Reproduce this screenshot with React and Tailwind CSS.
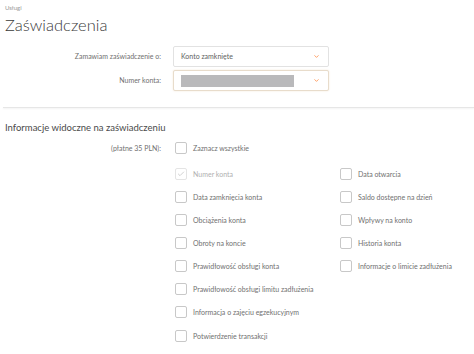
import { ChevronDown, Check } from 'lucide-react'

const rows = [
  ['Data zamknięcia konta', 'Saldo dostępne na dzień'],
  ['Obciążenia konta', 'Wpływy na konto'],
  ['Obroty na koncie', 'Historia konta'],
  ['Prawidłowość obsługi konta', 'Informacje o limicie zadłużenia'],
  ['Prawidłowość obsługi limitu zadłużenia', null],
  ['Informacja o zajęciu egzekucyjnym', null],
]

function Box({ checked, disabled }) {
  return (
    <span
      className={`flex h-[12px] w-[12px] shrink-0 items-center justify-center rounded-[2px] border ${
        disabled ? 'border-[#e4e4e4]' : 'border-[#c8c8c8]'
      } bg-white`}
    >
      {checked && <Check className="h-[8px] w-[8px] text-[#bbb]" strokeWidth={2} />}
    </span>
  )
}

function Item({ label, checked, disabled }) {
  return (
    <div className="flex h-[12px] items-center gap-[6px]">
      <Box checked={checked} disabled={disabled} />
      <span className={`text-[7px] ${disabled ? 'text-[#b0b0b0]' : 'text-[#707070]'}`}>{label}</span>
    </div>
  )
}

function Select({ children, active }) {
  return (
    <div
      className={`flex h-[21px] w-[156px] items-center justify-between rounded-[2px] border bg-white pl-[7px] pr-[8px] ${
        active ? 'border-[#e8dccb] shadow-[0_0_2px_#f3e6d6]' : 'border-[#e2e2e2]'
      }`}
    >
      {children}
      <ChevronDown className="h-[7px] w-[7px] text-[#ff6200]" strokeWidth={2} />
    </div>
  )
}

export default function App() {
  return (
    <div className="h-[354px] w-[474px] overflow-hidden bg-white font-['Lato',sans-serif] text-[#333]">
      <div className="px-[5px] pt-[4px]">
        <p className="text-[6px] leading-[8px] text-[#999]">Usługi</p>
        <h1 className="mt-[3px] text-[16.5px] font-light leading-[20px] text-[#3a3a3a]">Zaświadczenia</h1>
      </div>

      <div className="mt-[11px] flex flex-col gap-[3px]">
        <div className="flex items-center">
          <span className="w-[161px] text-right text-[7px] text-[#707070]">Zamawiam zaświadczenie o:</span>
          <div className="ml-[12px]">
            <Select>
              <span className="text-[7px] text-[#606060]">Konto zamknięte</span>
            </Select>
          </div>
        </div>
        <div className="flex items-center">
          <span className="w-[161px] text-right text-[7px] text-[#707070]">Numer konta:</span>
          <div className="ml-[12px]">
            <Select active>
              <span className="h-[12px] w-[113px] bg-[#b9b9bb]" />
            </Select>
          </div>
        </div>
      </div>

      <div className="ml-[3px] mt-[16px] h-px bg-[#e6e6e6] shadow-[0_1px_2px_#eee]" />

      <p className="mt-[14px] px-[5px] text-[9.5px] leading-[12px] text-[#4a4a4a]">
        Informacje widoczne na zaświadczeniu
      </p>

      <div className="mt-[8px] flex items-center">
        <span className="w-[161px] text-right text-[7px] text-[#707070]">(płatne 35 PLN):</span>
        <div className="ml-[14px]">
          <Item label="Zaznacz wszystkie" />
        </div>
      </div>

      <div className="ml-[175px] mt-[14px] flex flex-col gap-[11px]">
        <div className="grid grid-cols-[165px_1fr]">
          <Item label="Numer konta" checked disabled />
          <Item label="Data otwarcia" />
        </div>
        {rows.map(([a, b]) => (
          <div key={a} className="grid grid-cols-[165px_1fr]">
            <Item label={a} />
            {b ? <Item label={b} /> : <span />}
          </div>
        ))}
        <div className="mt-[1px]">
          <Item label="Potwierdzenie transakcji" />
        </div>
      </div>
    </div>
  )
}
